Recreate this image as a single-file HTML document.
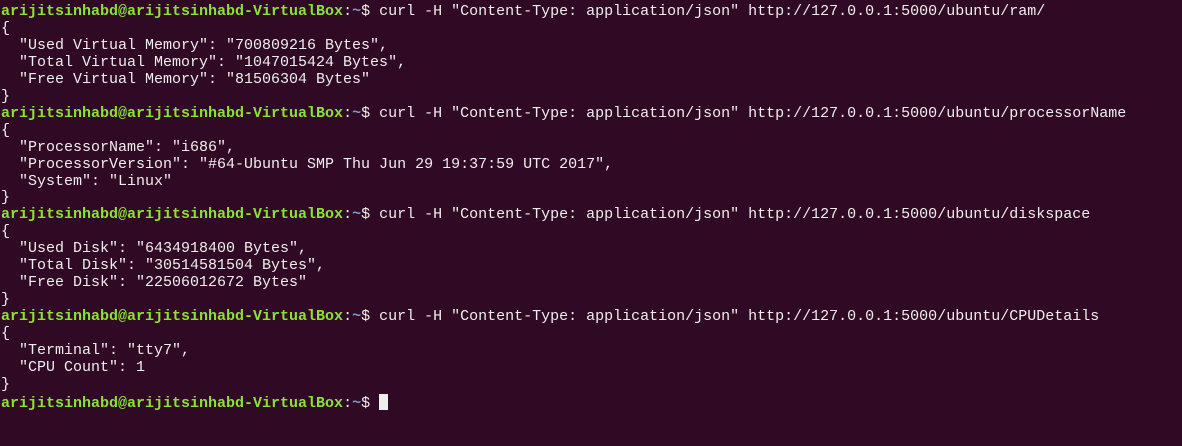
<!DOCTYPE html>
<html><head><style>
html,body{margin:0;padding:0;background:#300a24;width:1182px;height:446px;overflow:hidden}
pre{margin:0;padding:4px 0 0 1px;font-family:"Liberation Mono",monospace;font-size:15px;line-height:16.95px;color:#eeeeec;letter-spacing:0}
.g{color:#8ae234;font-weight:bold}.b{color:#729fcf;font-weight:bold}
.c{display:inline-block;width:9px;height:16px;background:#eeeeec;vertical-align:-3px}
</style></head><body><pre><span class="g">arijitsinhabd@arijitsinhabd-VirtualBox</span>:<span class="b">~</span>$ curl -H "Content-Type: application/json" http://127.0.0.1:5000/ubuntu/ram/
{
  "Used Virtual Memory": "700809216 Bytes",
  "Total Virtual Memory": "1047015424 Bytes",
  "Free Virtual Memory": "81506304 Bytes"
}
<span class="g">arijitsinhabd@arijitsinhabd-VirtualBox</span>:<span class="b">~</span>$ curl -H "Content-Type: application/json" http://127.0.0.1:5000/ubuntu/processorName
{
  "ProcessorName": "i686",
  "ProcessorVersion": "#64-Ubuntu SMP Thu Jun 29 19:37:59 UTC 2017",
  "System": "Linux"
}
<span class="g">arijitsinhabd@arijitsinhabd-VirtualBox</span>:<span class="b">~</span>$ curl -H "Content-Type: application/json" http://127.0.0.1:5000/ubuntu/diskspace
{
  "Used Disk": "6434918400 Bytes",
  "Total Disk": "30514581504 Bytes",
  "Free Disk": "22506012672 Bytes"
}
<span class="g">arijitsinhabd@arijitsinhabd-VirtualBox</span>:<span class="b">~</span>$ curl -H "Content-Type: application/json" http://127.0.0.1:5000/ubuntu/CPUDetails
{
  "Terminal": "tty7",
  "CPU Count": 1
}
<span class="g">arijitsinhabd@arijitsinhabd-VirtualBox</span>:<span class="b">~</span>$ <span class="c"></span></pre></body></html>
